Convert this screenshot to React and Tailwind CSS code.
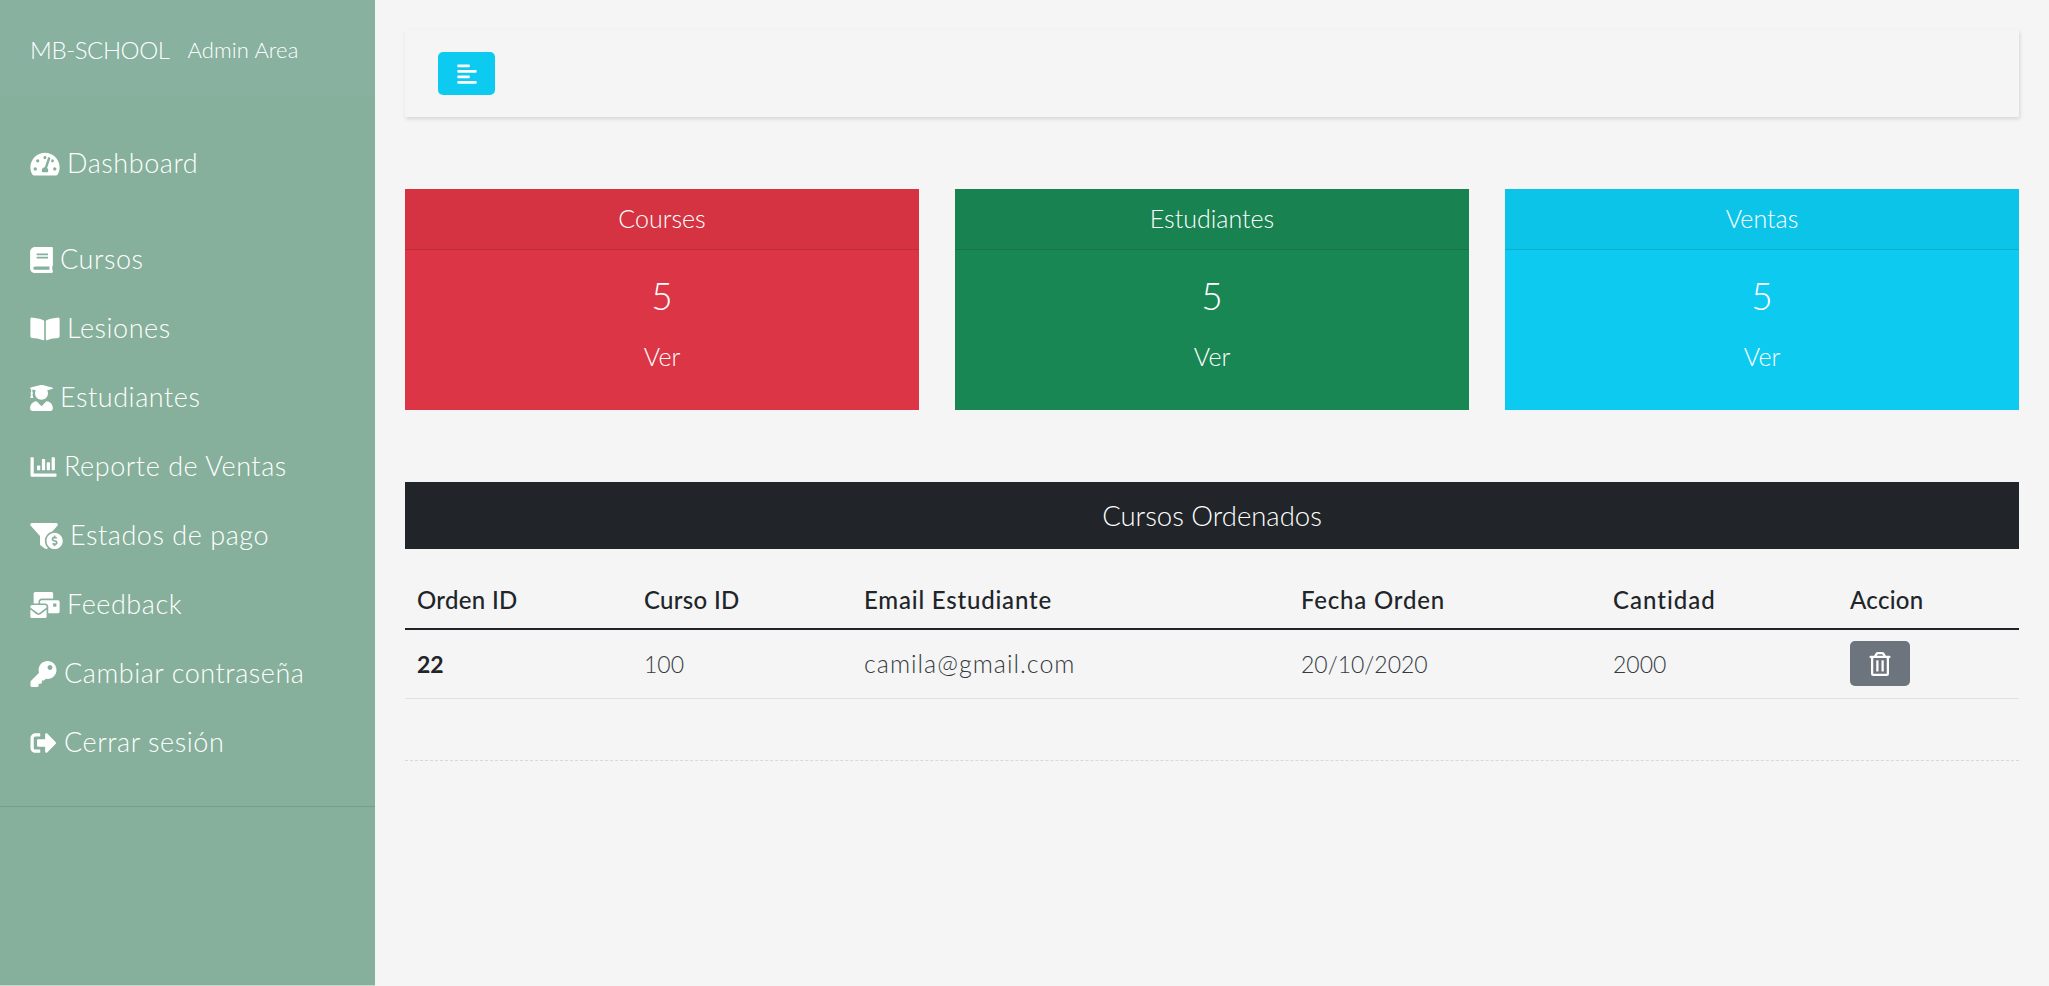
import React from "react";
import {
  FaTachometerAlt,
  FaBook,
  FaBookOpen,
  FaUserGraduate,
  FaChartBar,
  FaFunnelDollar,
  FaMailBulk,
  FaKey,
  FaSignOutAlt,
  FaAlignLeft,
  FaRegTrashAlt,
} from "react-icons/fa";

const font = "font-['Lato','Noto_Sans',sans-serif]";

const menu = [
  { label: "Cursos", icon: FaBook, w: "w-[23px]" },
  { label: "Lesiones", icon: FaBookOpen, w: "w-[30px]" },
  { label: "Estudiantes", icon: FaUserGraduate, w: "w-[23px]" },
  { label: "Reporte de Ventas", icon: FaChartBar, w: "w-[27px]" },
  { label: "Estados de pago", icon: FaFunnelDollar, w: "w-[33px]" },
  { label: "Feedback", icon: FaMailBulk, w: "w-[30px]" },
  { label: "Cambiar contraseña", icon: FaKey, w: "w-[27px]" },
  { label: "Cerrar sesión", icon: FaSignOutAlt, w: "w-[27px]" },
];

const cards = [
  { title: "Courses", bg: "bg-[#dc3545]" },
  { title: "Estudiantes", bg: "bg-[#198754]" },
  { title: "Ventas", bg: "bg-[#0dcaf0]" },
];

const SideItem = ({ label, icon: Icon, w }) => (
  <li className="flex h-[69px] items-center gap-[7px] pl-[30px] text-[27px] font-light tracking-[0.55px] text-white">
    <Icon className={`h-[26px] ${w} shrink-0`} />
    <span>{label}</span>
  </li>
);

const StatCard = ({ title, bg }) => (
  <div className={`${bg} flex-1 text-center text-white`}>
    <div className="flex h-[61px] items-center justify-center border-b border-black/10 bg-black/[0.03] text-[25px] font-light">
      {title}
    </div>
    <div className="flex h-[160px] flex-col items-center pt-[19px]">
      <p className="text-[37px] leading-[54px] font-light">5</p>
      <p className="mt-[15px] text-[25px] leading-[36px] font-light">Ver</p>
    </div>
  </div>
);

const App = () => {
  return (
    <div className={`flex min-h-screen bg-[#f5f5f5] ${font}`}>
      <aside className="flex w-[375px] shrink-0 flex-col border-b border-[#c5d9cf] bg-[#86b09b]">
        <div className="flex h-[96px] items-center gap-[18px] bg-[#88b19f] pt-[3px] pl-[30px] text-white">
          <span className="text-[24px] font-light tracking-[-0.4px]">MB-SCHOOL</span>
          <span className="text-[22px] font-light tracking-[0.1px]">Admin Area</span>
        </div>
        <ul className="border-b border-black/10 pt-[33px] pb-[29px]">
          <li className="mb-[27px] flex h-[69px] items-center gap-[7px] pl-[30px] text-[27px] font-light tracking-[0.55px] text-white">
            <FaTachometerAlt className="h-[26px] w-[30px] shrink-0" />
            <span>Dashboard</span>
          </li>
          {menu.map((item) => (
            <SideItem key={item.label} {...item} />
          ))}
        </ul>
      </aside>

      <main className="flex-1 pt-[30px] pr-[30px] pl-[30px]">
        <nav className="flex h-[87px] items-center pl-[33px] shadow-[1px_2px_4px_rgba(0,0,0,0.13)]">
          <button className="flex h-[43px] w-[57px] items-center justify-center rounded-[5px] bg-[#0dcaf0] text-white">
            <FaAlignLeft className="h-[22px] w-[22px]" />
          </button>
        </nav>

        <div className="mt-[72px] flex gap-[36px]">
          {cards.map((card) => (
            <StatCard key={card.title} {...card} />
          ))}
        </div>

        <div className="mt-[72px] flex h-[67px] items-center justify-center bg-[#212529] text-[27.5px] font-light text-white">
          Cursos Ordenados
        </div>

        <table className="mt-[16px] w-full table-fixed border-collapse text-left">
          <thead>
            <tr className="h-[64px] border-b-2 border-[#212529] text-[24px] tracking-[0.3px] text-[#212529]">
              <th className="w-[227px] px-[12px] pt-[7px] font-medium">Orden ID</th>
              <th className="w-[220px] px-[12px] pt-[7px] font-medium">Curso ID</th>
              <th className="w-[437px] px-[12px] pt-[7px] font-medium tracking-[0.8px]">Email Estudiante</th>
              <th className="w-[312px] px-[12px] pt-[7px] font-medium tracking-[0.8px]">Fecha Orden</th>
              <th className="w-[237px] px-[12px] pt-[7px] font-medium tracking-[1px]">Cantidad</th>
              <th className="px-[12px] pt-[7px] font-medium">Accion</th>
            </tr>
          </thead>
          <tbody>
            <tr className="h-[69px] border-b border-[#dee2e6] text-[23px] font-light text-[#343a40]">
              <td className="px-[12px] font-bold text-[#212529]">22</td>
              <td className="px-[12px]">100</td>
              <td className="px-[12px] text-[25px] tracking-[1px]">camila@gmail.com</td>
              <td className="px-[12px]">20/10/2020</td>
              <td className="px-[12px]">2000</td>
              <td className="px-[12px]">
                <button className="flex h-[45px] w-[60px] items-center justify-center rounded-[5px] bg-[#6c757d] text-white">
                  <FaRegTrashAlt className="h-[24px] w-[24px]" />
                </button>
              </td>
            </tr>
          </tbody>
        </table>

        <div className="mt-[61px] border-t border-dashed border-[#d8d8d8]" />
      </main>
    </div>
  );
};

export default App;
